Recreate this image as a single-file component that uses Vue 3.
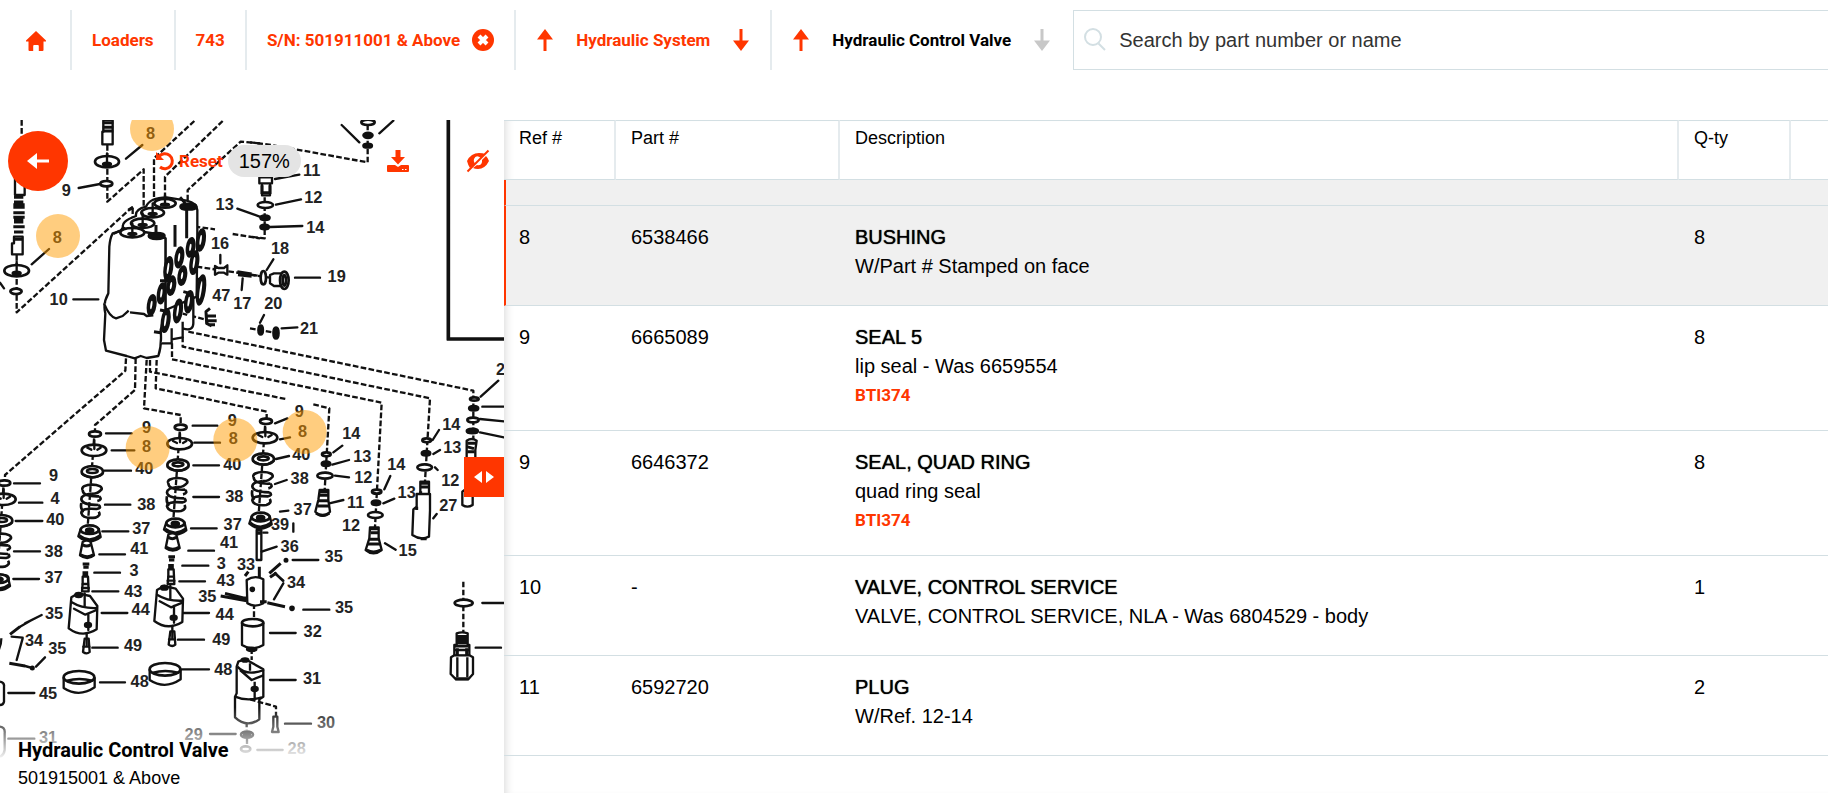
<template>
  <div class="page">
    <nav class="topbar" aria-label="Breadcrumb">
      <a class="crumb home" href="#" aria-label="Home">
        <svg width="20" height="20" viewBox="0 0 20 20"><path d="M10 0L20 9.500V10.500H17.500V19Q17.500 20 16.500 20H12.800V15Q12.800 14 11.800 14H8.200Q7.200 14 7.200 15V20H3.500Q2.500 20 2.500 19V10.500H0V9.500Z" /></svg>
      </a>
      <a class="crumb" href="#">Loaders</a>
      <a class="crumb" href="#">743</a>
      <div class="crumb serial">
        <a href="#">S/N: 501911001 &amp; Above</a>
        <button type="button" aria-label="Clear serial number">
          <svg width="22" height="22" viewBox="0 0 22 22"><circle cx="11" cy="11" r="11" /><path class="cross" d="M7 7L15 15M15 7L7 15" /></svg>
        </button>
      </div>
      <div v-for="step in steps" :key="step.name" class="crumb step" :class="{ current: step.current }">
        <button type="button" :aria-label="'Previous: ' + step.name">
          <svg width="18" height="22" viewBox="0 0 18 22"><path d="M9 0L17 10.500H10.500V22H7.500V10.500H1Z" /></svg>
        </button>
        <a href="#">{{ step.name }}</a>
        <button type="button" class="next" :disabled="step.current" :aria-label="'Next: ' + step.name">
          <svg width="18" height="22" viewBox="0 0 18 22"><path d="M9 22L1 11.500H7.500V0H10.500V11.500H17Z" /></svg>
        </button>
      </div>
      <label class="search">
        <svg width="24" height="24" viewBox="0 0 24 24"><circle cx="10" cy="9" r="8" /><path d="M15.500 15.500L22 22" /></svg>
        <input v-model="query" type="search" placeholder="Search by part number or name" aria-label="Search by part number or name" />
      </label>
    </nav>

    <main class="split">
      <section class="viewer" aria-label="Hydraulic Control Valve diagram">
        <!-- drawing units are a third of a pixel -->
        <svg class="drawing" viewBox="0 0 1512 2019" preserveAspectRatio="xMinYMin slice">
          <path v-for="(d, i) in guides" :key="i" class="dash" :d="d" />
          <g v-for="(sheet, i) in sheets" :key="i" :transform="`translate(${sheet.at})`">
            <path class="dash" :d="sheet.dashes" />
            <path v-for="d in sheet.solids" :key="d" class="solid" :d="d" />
            <path class="thick" :d="sheet.thick" />
            <ellipse v-for="(e, k) in sheet.rings" :key="'r' + k" class="ring" :cx="e[0]" :cy="e[1]" :rx="e[2]" :ry="e[3]" />
            <ellipse v-for="(e, k) in sheet.darks" :key="'d' + k" class="dark" :cx="e[0]" :cy="e[1]" :rx="e[2]" :ry="e[3]" />
            <path class="leader" :d="sheet.leaders" />
            <text v-for="(t, k) in sheet.labels" :key="'t' + k" :x="t[0]" :y="t[1]">{{ t[2] }}</text>
          </g>
          <!-- right-hand ports on the valve body -->
          <g transform="translate(0 -30)">
            <template v-for="(p, i) in ports" :key="'v' + i">
              <ellipse class="dark" :cx="p[0]" :cy="p[1]" rx="11" :ry="p[2]" :transform="`rotate(8 ${p[0]} ${p[1]})`" />
              <ellipse class="slot" :cx="p[0] - 1" :cy="p[1]" rx="3" :ry="p[2] - 17" :transform="`rotate(8 ${p[0]} ${p[1]})`" />
            </template>
          </g>
          <g v-for="(c, i) in columns" :key="'c' + i" :transform="`translate(${c})`">
            <path class="dash" d="M2 -60L-22 270" />
            <ellipse class="ring" cx="3" cy="-49" rx="18" ry="8" />
            <ellipse class="ring" cx="0" cy="0" rx="37" ry="17" />
            <path class="solid bare" d="M-20 -8L-8 -2M1 -30V-4M20 -8L10 -2" />
            <ellipse class="ring" cx="-5" cy="64" rx="32" ry="17" />
            <ellipse class="ring" cx="-5" cy="62" rx="16" ry="6" />
            <path class="solid bare" d="M-36 70Q-2 92 26 70" />
            <path class="thick coil" d="M-34 118A29 12 0 1 1 22 118Q10 132 -8 130M-34 118Q-34 140 16 138M-8 130Q-38 134 -38 146Q-36 164 14 164M16 138Q26 148 10 152M-38 158Q-42 178 -30 184M14 164Q24 174 8 176Q-38 172 -38 188Q-34 206 4 202Q22 196 14 184" />
            <path class="solid" d="M-40 236L-47 258Q-14 286 20 260L14 234" />
            <ellipse class="ring" cx="-13" cy="238" rx="27" ry="13" />
            <ellipse class="dark" cx="-13" cy="240" rx="11" ry="6" />
            <path class="thick" d="M-44 256Q-14 280 18 256" />
          </g>
          <g v-for="(c, i) in pistons" :key="'p' + i" :transform="`translate(${c})`">
            <path class="solid" d="M-12 -104L-20 -64Q2 -48 22 -64L12 -104Q0 -112 -12 -104Z" />
            <path class="thick" d="M-12 -96Q0 -88 12 -96M-18 -66Q2 -54 20 -66" />
            <path class="thick" d="M-12 -38H8M-10 -28H6M-8 -16V0M0 -16V0" />
            <path class="solid" d="M-12 0H4L6 44H-14L-12 20Z" />
            <path class="solid bare" d="M-12 22H4M-14 34H6" />
            <path class="solid" d="M-54 155L-46 62L-25 50L10 58L32 88L30 158Q-14 185 -54 155Z" />
            <path class="solid bare" d="M-46 76Q-14 96 30 94M-38 96L-4 114L30 100M-6 50V88M5 110V160" />
            <ellipse class="dark" cx="-24" cy="55" rx="10" ry="6" />
            <ellipse class="dark" cx="4" cy="145" rx="9" ry="6" />
            <path class="solid" d="M-6 186H6L9 226Q0 234 -11 226Z" />
            <path class="solid bare" d="M-10 210H8M0 170V205" />
          </g>
          <g v-for="(c, i) in collars" :key="'k' + i" :transform="`translate(${c})`">
            <path class="solid" d="M-46 0V32Q0 62 47 30V0" />
            <ellipse class="ring" cx="0" cy="0" rx="46" ry="19" />
            <path class="solid bare" d="M-36 10Q0 0 40 10" />
          </g>
          <circle v-for="(h, i) in hotspots" :key="'h' + i" class="hotspot" :cx="h[0]" :cy="h[1]" r="66" />
        </svg>

        <button type="button" class="back" aria-label="Back">
          <svg width="22" height="18" viewBox="0 0 22 18"><path d="M10 1V7.500H22V10.500H10V17L0 9Z" /></svg>
        </button>
        <div class="zoom-tools">
          <button type="button" class="reset">
            <svg width="20" height="20" viewBox="0 0 20 20"><path class="arc" d="M4 5.500A7.500 7.500 0 1 1 5 16" /><path d="M1 1V9H9Z" /></svg>
            Reset
          </button>
          <output class="level">157%</output>
        </div>
        <div class="view-tools">
          <button type="button" aria-label="Download">
            <svg width="24" height="24" viewBox="0 0 24 24"><path d="M9.500 1H14.500V8H19L12 15.500L5 8H9.500ZM2 16H9L12 18L15 16H22Q23 16 23 17V22Q23 23 22 23H2Q1 23 1 22V17Q1 16 2 16Z" /><path class="dots" d="M16 20.500H17.500M19 20.500H20.500" /></svg>
          </button>
          <button type="button" aria-label="Hide markers">
            <svg width="24" height="24" viewBox="0 0 24 24"><path d="M1 12Q5 4 13 4Q17 4 19 5L15 9Q10 5 8 10Q7 12 9 15L4 19Q2 16 1 12ZM20 7Q22 9 23 12Q19 20 12 20Q9 20 7 19L11 16Q15 17 16 13V11Z" /><path class="slash" d="M1.500 22.500L22.500 1.500" /></svg>
          </button>
        </div>
        <button type="button" class="handle" aria-label="Resize panel">
          <svg width="20" height="12" viewBox="0 0 20 12"><path d="M8 0V12L0 6ZM12 0V12L20 6Z" /></svg>
        </button>
        <div class="caption">
          <h1>Hydraulic Control Valve</h1>
          <p>501915001 &amp; Above</p>
        </div>
      </section>

      <section class="parts">
        <table>
          <colgroup>
            <col class="c-ref" />
            <col class="c-part" />
            <col />
            <col class="c-qty" />
            <col class="c-end" />
          </colgroup>
          <thead>
            <tr>
              <th scope="col">Ref #</th>
              <th scope="col">Part #</th>
              <th scope="col">Description</th>
              <th scope="col">Q-ty</th>
              <td></td>
            </tr>
          </thead>
          <tbody>
            <tr class="selected tail"><td colspan="5"></td></tr>
            <tr v-for="part in parts" :key="part.ref + part.number" :class="{ selected: part.ref === selectedRef }">
              <td>{{ part.ref }}</td>
              <td>{{ part.number }}</td>
              <td>
                <div class="name">{{ part.name }}</div>
                <div>{{ part.note }}</div>
                <a v-if="part.link" class="kit" href="#">{{ part.link }}</a>
              </td>
              <td>{{ part.qty }}</td>
              <td></td>
            </tr>
          </tbody>
        </table>
      </section>
    </main>
  </div>
</template>

<script setup>
import { ref } from 'vue'

const query = ref('')
const selectedRef = ref('8')

const steps = [
  { name: 'Hydraulic System', current: false },
  { name: 'Hydraulic Control Valve', current: true }
]

const parts = [
  { ref: '8', number: '6538466', name: 'BUSHING', note: 'W/Part # Stamped on face', qty: 8 },
  { ref: '9', number: '6665089', name: 'SEAL 5', note: 'lip seal - Was 6659554', link: 'BTI374', qty: 8 },
  { ref: '9', number: '6646372', name: 'SEAL, QUAD RING', note: 'quad ring seal', link: 'BTI374', qty: 8 },
  { ref: '10', number: '-', name: 'VALVE, CONTROL SERVICE', note: 'VALVE, CONTROL SERVICE, NLA - Was 6804529 - body', qty: 1 },
  { ref: '11', number: '6592720', name: 'PLUG', note: 'W/Ref. 12-14', qty: 2 }
]

const hotspots = [[456, 27], [174, 348], [443, 984], [706, 960], [914, 936]]
const columns = ['282 991', '539 971', '795 953', '10 1138']
const pistons = ['260 1370', '517 1348']
const collars = ['237 1672', '495 1648']
const ports = [
  [603, 390, 32], [572, 412, 28], [538, 442, 30], [583, 458, 34], [505, 475, 34], [547, 497, 28], [514, 527, 28],
  [603, 540, 44], [485, 550, 30], [567, 575, 32], [455, 585, 30], [534, 603, 34], [497, 632, 34]
]

// dashed lines that run from the valve body to each column of parts
const guides = [
  'M565 635L1420 812V1010',
  'M548 650V680L1290 835L1274 1100',
  'M516 670V718L1145 848L1124 1240',
  'M450 720V755L862 838M940 853L988 865L974 1110',
  'M470 720L467 805L800 875V895',
  'M440 720L432 865L542 885V912',
  'M407 715L405 810L285 915V935',
  'M378 715L376 752L15 1065V1085'
]

const sheets = [
  {
    at: '0 -30',
    dashes: 'M65 30V80M322 105V275L431 178V345M50 435V607L398 290V355M583 33L462 145V305M668 33L495 200V275M780 100L722 95L563 240V290M465 333L645 358M698 372L780 385M590 470L780 498M525 605L615 628',
    solids: [
      'M310 30H338V103H307V65H310Z',
      'M45 205H74V255H45ZM42 380H68V433H36V400H42Z',
      'M338 370Q330 385 328 410L325 550Q308 580 316 610L312 690L318 722L380 738L404 745L422 738L440 744L475 738Q486 705 482 660L497 600V385L466 372V340L396 352Z',
      'M370 355Q360 335 408 318Q405 298 438 290Q450 262 500 262L560 272Q592 280 592 300V365L590 560L497 600V385L470 372L396 360Z',
      'M312 580Q328 620 348 625L368 618L386 602M390 607L432 612L440 618L460 616M340 372L360 362',
      'M482 700L515 700V655M515 688L548 682V635M548 655Q580 665 580 640V560',
      'M645 468L655 474H672L682 466V494L672 488H655L645 494Z'
    ],
    thick: 'M308 38H340M308 52H340M308 63H340M42 262H70M42 276H70M40 284H74M40 292H74M40 308H74M40 322H74M42 330H70M42 336H70M40 350H74M42 366H70M42 388H66M712 485L755 492M714 494L755 499M630 595L618 605L620 640L635 648M618 618H648M618 632H650M625 644H645M540 262L556 280M372 350L362 364M385 300L400 292M462 665L482 668M480 600L500 604M550 545L570 550M480 512L505 512M592 510L612 500M525 345V410M560 295V385M468 345V372',
    rings: [
      [321, 155, 36, 17], [319, 221, 18, 8], [50, 482, 37, 17], [48, 544, 17, 8],
      [495, 280, 32, 13], [458, 308, 34, 14], [428, 340, 35, 14], [397, 368, 36, 14]
    ],
    darks: [
      [321, 163, 12, 5], [50, 490, 12, 5], [565, 290, 24, 9], [470, 378, 24, 9], [495, 284, 12, 3], [458, 312, 12, 3], [428, 345, 12, 3], [397, 372, 12, 3]
    ],
    leaders: 'M236 234L300 222M378 146L427 105M95 463L147 417M220 568H295M712 296L785 322M661 435V460M725 540L728 505M0 518L12 535M321 130V158M50 455V485M495 255V280M458 280V308M428 310V340M397 340V368',
    labels: [[199, 257, 9], [452, 86, 8], [172, 399, 8], [176, 585, 10], [674, 300, 13], [660, 417, 16], [664, 573, 47], [727, 596, 17]]
  },
  {
    at: '750 -30',
    dashes: 'M353 20V157L65 105L0 97M44 190V385L0 380M0 494L60 503M0 655L75 668',
    solids: ['M28 202H66V220H28ZM36 220H60V256H36Z', 'M60 495L72 490H95V528H72L60 520Z'],
    thick: 'M36 226V252M60 226V252M38 248H58M45 495V515',
    rings: [[354, 37, 20, 8], [46, 285, 23, 9], [40, 503, 8, 20], [103, 511, 13, 26], [103, 511, 5, 16]],
    darks: [[354, 76, 14, 8], [353, 107, 13, 6], [45, 323, 14, 7], [44, 351, 13, 7], [32, 660, 7, 14], [78, 669, 8, 17]],
    leaders: 'M275 45L328 97M430 32L388 70M75 207L148 194M78 284L153 268M60 351L157 348M70 448L50 480M135 503H210M42 615L30 638M95 655L142 652M597 20V685H762M593 20V689H762',
    labels: [[185, 197, 11], [190, 278, 12], [196, 369, 14], [90, 431, 18], [260, 515, 19], [70, 598, 20], [177, 671, 21]]
  },
  {
    at: '0 690',
    leaders: 'M42 400H120M57 458H127M47 513H127M42 604H120M40 687H117M318 250H395M335 301H403M313 362H393M315 464H391M307 544H385M298 613H375M283 668H360M578 227H652M583 278H660M580 346H657M580 441H657M573 535H650M565 602H642M547 647H625',
    labels: [
      [161, 394, 9], [165, 463, 4], [166, 526, 40], [161, 621, 38], [161, 698, 37],
      [440, 250, 9], [440, 306, 8], [433, 371, 40], [439, 481, 38], [424, 553, 37], [418, 612, 41], [402, 679, 3],
      [697, 227, 9], [700, 283, 8], [697, 361, 40], [703, 457, 38], [698, 541, 37], [687, 594, 41], [664, 657, 3], [738, 661, 33]
    ]
  },
  {
    at: '750 690',
    solids: [
      'M209 420H235V450L240 485Q218 510 196 485L205 450Z',
      'M360 532H386V565L395 600Q370 620 347 600L358 565Z',
      'M511 395H537V432H511ZM500 432H540V482L537 560Q512 572 487 555L490 478L500 470Z',
      'M650 272Q665 262 680 272L676 300V435H668V465Q652 475 637 465V425L650 415Z',
      'M20 540H34V630H20Z'
    ],
    thick: 'M210 425H234M210 436H234M206 452H236M203 468H238M198 490Q218 502 238 490M362 536H385M362 548H385M358 568H388M354 582H392M350 600Q370 612 392 600M513 400H535M513 411H535M512 424V430M652 280H678M650 290L672 296M652 305H674M18 540H36M20 550H34M28 650V700M500 470V480M512 566H530M92 640L58 670',
    rings: [[229, 313, 13, 6], [225, 377, 23, 9], [380, 425, 14, 6], [376, 495, 22, 9], [530, 271, 13, 6], [524, 352, 22, 9], [673, 147, 13, 5], [669, 210, 17, 7]],
    darks: [[228, 341, 13, 7], [378, 458, 13, 7], [528, 310, 13, 7], [671, 175, 14, 7], [667, 243, 17, 7], [108, 631, 4, 4]],
    leaders: 'M112 205L75 220M120 262L90 268M117 318L78 327M110 390L75 402M115 482L90 485M80 590L35 605M277 287L250 307M297 330L247 344M297 382L255 377M280 450L238 460M421 378L403 418M433 446L400 460M405 580L437 599M567 240L548 270M570 300L550 312M555 352L563 360M560 492L550 505M745 92L692 140M697 170H762M690 207L762 214M690 247L762 262M128 630H205M130 520V545M40 548H52M76 670L98 692',
    labels: [
      [148, 202, 9], [158, 262, 8], [154, 329, 40], [149, 401, 38], [158, 495, 37], [90, 540, 39], [119, 606, 36], [251, 636, 35],
      [304, 267, 14], [337, 337, 13], [340, 399, 12], [317, 473, 11], [303, 542, 12], [439, 360, 14], [470, 443, 13], [473, 618, 15],
      [604, 239, 14], [607, 308, 13], [601, 408, 12], [595, 484, 27], [752, 75, 2]
    ]
  },
  {
    at: '0 1350',
    dashes: 'M762 100V155M755 235V270M740 455V480M741 505V530',
    solids: [
      'M740 30Q765 14 790 28V100Q765 114 742 100Z',
      'M726 158V225Q757 245 790 225V158',
      'M710 290L715 275L735 267L790 298V380L778 388V448Q740 475 705 442V380L710 370Z',
      'M705 380Q740 395 785 382M712 290Q740 320 792 300M720 300L755 330L790 316M750 280V302M764 335V390',
      'M0 335Q14 338 12 350V395Q10 405 0 405M0 470Q16 472 14 490V540Q12 555 0 560M-10 250Q4 230 4 205',
      'M0 15Q24 12 26 24L24 46Q10 58 0 54'
    ],
    thick: 'M30 193L60 170M28 280L75 288M662 78L740 92M675 70L740 86M690 82L738 84M735 18L745 5',
    rings: [[758, 158, 32, 11], [741, 494, 18, 9], [737, 537, 14, 8]],
    darks: [[755, 238, 14, 5], [735, 270, 10, 5], [764, 357, 9, 6], [97, 294, 4, 4], [757, 58, 5, 5], [741, 494, 9, 5]],
    leaders: 'M277 64H355M305 129H382M277 233H353M300 337H375M125 135L75 160M60 170L95 150M135 262L108 290M75 288L97 294M25 369H103M25 506H103M538 34H615M547 129H627M534 209H612M545 298H627M630 492H707M68 205L50 270M35 200L68 203',
    labels: [
      [400, 80, 43], [422, 136, 44], [399, 242, 49], [162, 147, 35], [102, 227, 34], [172, 253, 35], [419, 351, 48], [144, 387, 45], [144, 520, 31],
      [677, 48, 43], [674, 149, 44], [622, 97, 35], [664, 226, 49], [670, 315, 48], [581, 509, 29]
    ]
  },
  {
    at: '750 1350',
    dashes: 'M0 388L78 410V440M640 35V188',
    solids: ['M70 440H82V470L86 486H66L70 470Z', 'M620 190Q636 184 653 190V225H658V258H613V225H620Z', 'M603 262L613 256H658L669 262V312L655 328H618L602 312Z', 'M622 262V322M652 262V322M613 240H658'],
    thick: 'M625 195V222M632 195V222M640 195V222M648 195V222M615 228H656M622 235V255M650 235V255M616 326H656M52 98L105 110M30 95H50M80 8L60 22',
    rings: [[641, 99, 27, 10]],
    darks: [[126, 115, 5, 5]],
    leaders: 'M160 119H238M60 189H137M60 330H137M105 461H183M22 540H98M100 40L72 88M75 10L100 32M697 99H762M677 233H753',
    labels: [[138, 53, 34], [282, 130, 35], [188, 202, 32], [186, 343, 31], [228, 474, 30], [140, 552, 28]]
  }
]
</script>

<style>
body {
  background: #fff;
}
</style>

<style scoped>
.page {
  --accent: #ff3600;
  --line: #d3dfe3;
  --line-soft: #e5ebee;
  --heading: Roboto, "Liberation Sans", sans-serif;
  min-height: 100vh;
  display: flex;
  flex-direction: column;
  color: #000;
  font: 20px/29px "Liberation Sans", Arial, sans-serif;
}
.page *,
.page {
  box-sizing: border-box;
}
a {
  color: var(--accent);
  text-decoration: none;
}
button {
  display: inline-flex;
  align-items: center;
  justify-content: center;
  padding: 0;
  border: 0;
  background: none;
  color: var(--accent);
  font: inherit;
  cursor: pointer;
}
svg {
  display: block;
  flex: none;
  fill: currentColor;
}

.topbar {
  display: flex;
  height: 60px;
  margin: 10px 0 50px;
}
.crumb {
  display: flex;
  align-items: center;
  padding: 0 20px;
  border-right: 2px solid var(--line-soft);
  font: bold 17px/30px var(--heading);
  color: var(--accent);
  white-space: nowrap;
}
.home {
  padding: 2px 24px 0 26px;
}
.serial {
  gap: 12px;
}
.step {
  gap: 22px;
}
.step.current {
  padding-right: 22px;
  border-right: 0;
}
.step.current a {
  color: #000;
}
.next:disabled {
  color: #c8c8c8;
}
.cross {
  fill: none;
  stroke: #fff;
  stroke-width: 4;
}
.search {
  flex: 1;
  display: flex;
  align-items: center;
  gap: 12px;
  padding-left: 9px;
  border: 1px solid var(--line);
  border-right: 0;
}
.search svg {
  fill: none;
  stroke: #d3dfe3;
  stroke-width: 2;
}
.search input {
  flex: 1;
  min-width: 0;
  padding: 0;
  border: 0;
  outline: 0;
  background: none;
  font: inherit;
  color: #333;
}
.search input::placeholder {
  color: #333;
  opacity: 1;
}

.split {
  flex: 1;
  display: flex;
}
.viewer {
  position: relative;
  z-index: 1;
  flex: 0 0 504px;
  overflow: hidden;
  background: #fff;
}
.drawing {
  position: absolute;
  inset: 0;
  width: 100%;
  height: 100%;
}
.drawing path,
.drawing ellipse {
  stroke: #111;
  stroke-linejoin: round;
  stroke-width: 7;
}
.drawing .dash {
  fill: none;
  stroke-dasharray: 17 7;
}
.drawing .solid {
  fill: #fff;
}
.drawing .solid.bare,
.drawing .leader {
  fill: none;
  stroke-linecap: round;
}
.drawing .thick {
  fill: none;
  stroke-width: 9;
}
.drawing .thick.coil {
  stroke-width: 8;
}
.drawing .ring {
  fill: #fff;
  stroke-width: 8;
}
.drawing .dark {
  fill: #111;
}
.drawing .slot {
  fill: #fff;
  stroke: none;
}
.drawing text {
  fill: #222;
  font: bold 49px "Liberation Sans", Arial, sans-serif;
  text-anchor: middle;
}
.hotspot {
  fill: #ff9b00;
  fill-opacity: 0.5;
}

.back {
  position: absolute;
  top: 11px;
  left: 8px;
  width: 60px;
  height: 60px;
  border-radius: 50%;
  background: var(--accent);
  color: #fff;
}
.zoom-tools {
  position: absolute;
  top: 25px;
  left: 155px;
  display: flex;
  align-items: center;
  gap: 5px;
}
.reset {
  gap: 4px;
  font: bold 17px/32px var(--heading);
}
.reset .arc {
  fill: none;
  stroke: currentColor;
  stroke-width: 3;
}
.level {
  padding: 0 11px;
  border-radius: 16px;
  background: #e4e4e4;
  line-height: 32px;
}
.view-tools {
  position: absolute;
  top: 29px;
  right: 14px;
  display: flex;
  gap: 56px;
}
.view-tools .dots {
  stroke: #fff;
  stroke-width: 1;
}
.view-tools .slash {
  stroke: currentColor;
  stroke-width: 2;
}
.handle {
  position: absolute;
  top: 50%;
  right: 0;
  width: 40px;
  height: 40px;
  background: var(--accent);
  color: #fff;
}
.caption {
  position: absolute;
  inset: auto 0 0;
  padding: 52px 18px 2px;
  background: linear-gradient(rgba(255, 255, 255, 0) 24px, #fff 78px);
}
.caption h1 {
  margin: 0;
  font: bold 20px/30px var(--heading);
}
.caption p {
  margin: 0;
  font-size: 18px;
  line-height: 26px;
}

.parts {
  flex: 1;
  min-width: 0;
  box-shadow: inset 8px 0 8px -6px #ddd;
}
table {
  width: 100%;
  table-layout: fixed;
  border-collapse: separate;
  border-spacing: 0;
}
.c-ref,
.c-qty {
  width: 112px;
}
.c-part {
  width: 224px;
}
.c-end {
  width: 37px;
}
th,
td {
  padding: 17px 15px 24px;
  border-bottom: 1px solid var(--line);
  text-align: left;
  vertical-align: top;
}
thead th,
thead td {
  height: 60px;
  padding-top: 3px;
  padding-bottom: 0;
  border-top: 1px solid var(--line);
  font-size: 18px;
  font-weight: normal;
}
thead th {
  border-right: 2px solid var(--line-soft);
}
.selected td {
  background: #f0f0f0;
}
.selected td:first-child {
  padding-left: 13px;
  border-left: 2px solid var(--accent);
}
.tail td {
  height: 26px;
  padding: 0;
}
.name {
  text-shadow: 0 0 1px #000;
}
.kit {
  display: block;
  margin-bottom: -4px;
  font: bold 17px/29px var(--heading);
}
</style>
